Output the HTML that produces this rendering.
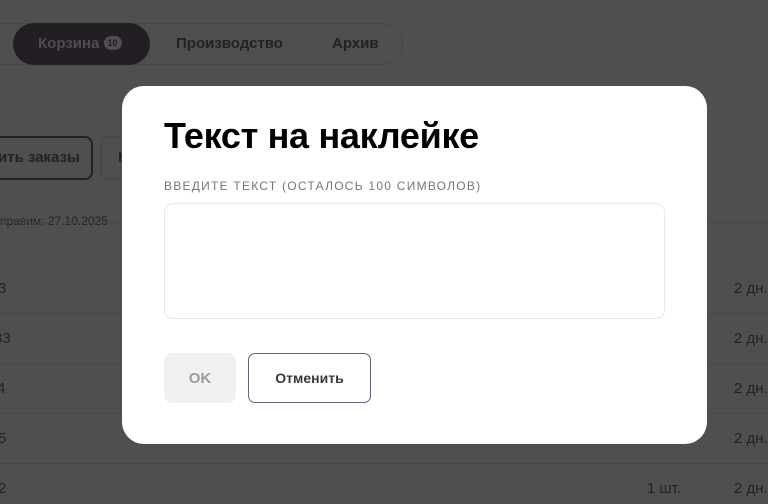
<!DOCTYPE html>
<html><head><meta charset="utf-8"><style>
*{box-sizing:border-box;margin:0;padding:0}
body{width:768px;height:504px;overflow:hidden;background:#4f4f4f;font-family:"Liberation Sans",sans-serif;position:relative;color:#222}
.abs{position:absolute}
.tabs{left:-20px;top:23px;width:423px;height:42px;border:1px solid #484848;border-radius:21px}
.act{left:13px;top:23px;width:137px;height:42px;background:#221e24;border-radius:21px;color:#4f4d50;font-weight:bold;font-size:15px;line-height:42px;padding-left:25px}
.badge{display:inline-block;background:#4f4d50;color:#221e24;font-size:9px;line-height:14px;height:14px;padding:0 4px;border-radius:7px;vertical-align:2px}
.tab{top:23px;line-height:42px;font-weight:bold;font-size:15px;color:#222}
.btn{top:136px;height:44px;border:2px solid #222;border-radius:8px;font-weight:bold;font-size:15px;line-height:40px;color:#222}
.row{left:0;width:768px;height:1px;background:#474747}
.rt{font-size:15px;color:#222}
.modal{left:122px;top:86px;width:585px;height:358px;background:#fff;border-radius:22px}
h1{position:absolute;left:42px;top:29px;font-size:36px;font-weight:bold;color:#000;letter-spacing:-0.3px}
.lbl{position:absolute;left:42px;top:93px;font-size:12px;letter-spacing:1.25px;color:#7a7378}
.ta{position:absolute;left:42px;top:117px;width:501px;height:116px;border:1px solid #e9e9e9;border-radius:9px}
.ok{position:absolute;left:42px;top:267px;width:72px;height:50px;background:#f2f1f0;border-radius:8px;color:#9a9a9a;font-weight:bold;font-size:15px;text-align:center;line-height:52px}
.cn{position:absolute;left:126px;top:267px;width:123px;height:50px;border:1px solid #6e5f7a;border-radius:7px;color:#3d3540;font-weight:bold;font-size:14px;text-align:center;line-height:49px}
</style></head><body>
<div class="abs tabs"></div>
<div class="abs act">Корзина <span class="badge">10</span></div>
<div class="abs tab" style="left:176px">Производство</div>
<div class="abs tab" style="left:332px">Архив</div>
<div class="abs btn" style="left:-20px;width:113px;padding-left:16px">ить заказы</div>
<div class="abs btn" style="left:100px;width:60px;padding-left:16px;border-color:#484848">К</div>
<div class="abs rt" style="left:0;top:214px;font-size:12px">правим: 27.10.2025</div>
<div class="abs row" style="top:222px"></div>
<div class="abs row" style="top:313px"></div>
<div class="abs row" style="top:363px"></div>
<div class="abs row" style="top:413px"></div>
<div class="abs row" style="top:463px"></div>
<div class="abs rt" style="left:-2px;top:280px">3</div>
<div class="abs rt" style="left:-6px;top:330px">33</div>
<div class="abs rt" style="left:-3px;top:380px">4</div>
<div class="abs rt" style="left:-2px;top:430px">5</div>
<div class="abs rt" style="left:-2px;top:480px">2</div>
<div class="abs rt" style="left:734px;top:280px">2 дн.</div>
<div class="abs rt" style="left:734px;top:330px">2 дн.</div>
<div class="abs rt" style="left:734px;top:380px">2 дн.</div>
<div class="abs rt" style="left:734px;top:430px">2 дн.</div>
<div class="abs rt" style="left:734px;top:480px">2 дн.</div>
<div class="abs rt" style="left:647px;top:480px">1 шт.</div>
<div class="abs modal">
<h1>Текст на наклейке</h1>
<div class="lbl">ВВЕДИТЕ ТЕКСТ (ОСТАЛОСЬ 100 СИМВОЛОВ)</div>
<div class="ta"></div>
<div class="ok">OK</div>
<div class="cn">Отменить</div>
</div>
</body></html>
